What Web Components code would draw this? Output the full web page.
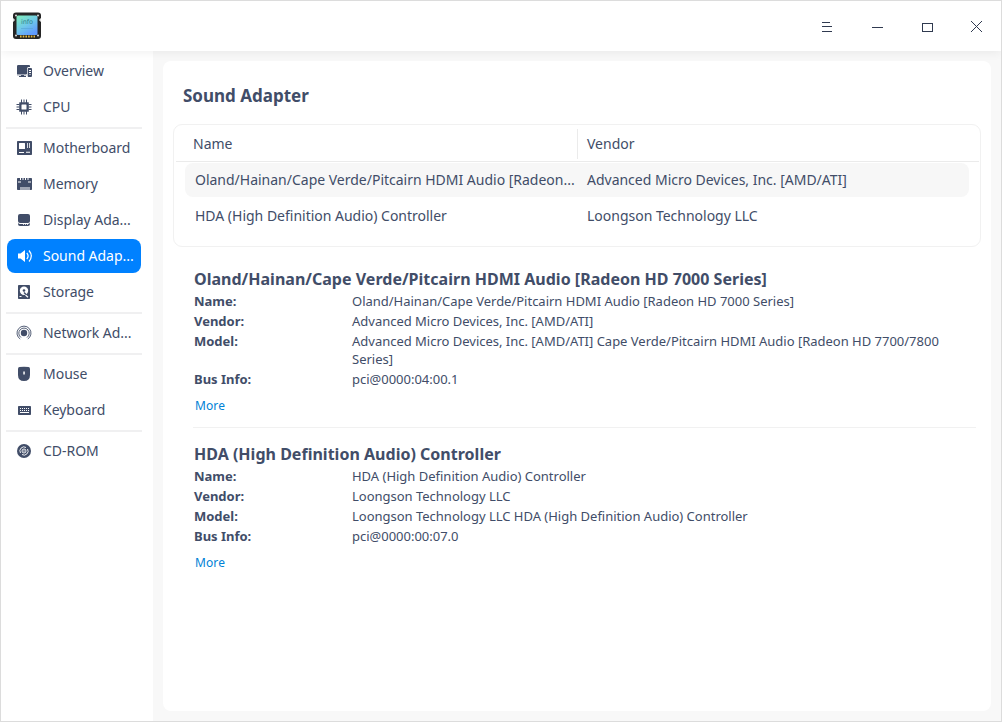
<!DOCTYPE html>
<html lang="en">
<head>
<meta charset="utf-8">
<title>Device Manager</title>
<style>
html,body{margin:0;height:100%;overflow:hidden}
body{font-family:"Noto Sans",sans-serif;color:#414d68}
</style>
</head>
<body>
<device-window></device-window>
<script>
const ICONS={
overview:'<path d="M1 3.200Q1 2 2.200 2H13q1 0 1 1v1h-1.500q-1.500 0-1.500 1.500V11H1Z"/><path d="M1 11.500h9.500v.8H1zM5 12h3v1H5zM3 13h7v1H3z"/><path fill-rule="evenodd" d="M12.500 5h2.500q1 0 1 1v7q0 1-1 1h-2.500q-.8 0-.8-1V6q0-1 .8-1Zm.5 2v1h2v-1Zm0 2v1h2v-1Zm.5 2v1h1v-1Z"/>',
cpu:'<rect x="3.200" y="3.200" width="9.600" height="9.600" rx=".5"/><path d="M5 .5h1v15H5zM7.500.5h1v3h-1zM7.500 12.500h1v3h-1zM10 .5h1v15h-1zM.5 5h3v1h-3zM.5 7.500h3v1h-3zM.5 10h3v1h-3zM12.500 5h3v1h-3zM12.500 7.500h3v1h-3zM12.500 10h3v1h-3z"/><rect x="5.500" y="5.500" width="5" height="5" rx=".5" fill="#fff"/>',
motherboard:'<path fill-rule="evenodd" d="M1.800 1h13.400q.8 0 .8.800v12.400q0 .8-.8.800H1.800q-.8 0-.8-.8V1.800q0-.8.800-.8ZM3.500 3Q3 3 3 3.500v5q0 .5.500.5h5q.5 0 .5-.5v-5Q9 3 8.500 3Zm7.500 0v5h.8V3Zm2 0v5h.8V3ZM3 12v1h5v-1Zm7-.2v1h4v-1Z"/>',
memory:'<path fill-rule="evenodd" d="M1.800 2H4v2h1V2h1.500v2h1V2H9v2h1V2h1.500v2h1V2h2.700q.8 0 .8.800v10.400q0 .8-.8.800H13.500v-3h-1v3h-1v-3h-1v3h-1v-3h-1v3h-1v-3h-1v3h-1v-3h-1v3H1.800q-.8 0-.8-.8V2.800Q1 2 1.800 2ZM2 5.500v.9h3v-.9Zm10 0v.9h3v-.9Z"/>',
display:'<path d="M2 4q0-2 2-2h8q2 0 2 2v5q0 2-2 2H4q-2 0-2-2Z"/><path fill-rule="evenodd" d="M2 11q1 1 2 1h8q1 0 2-1v1q0 2-2 2H4q-2 0-2-2Zm5 1.300v.8h1v-.8Zm2 0v.8h1v-.8Zm2 0v.8h1v-.8Z"/>',
sound:'<path d="M2 5.500h2.500L9 2v12L4.500 10.500H2Z"/><path fill="none" stroke="currentColor" stroke-width="1.200" d="M10.800 5q2.600 3 0 6M13 2.500q4.600 5.500 0 11"/>',
storage:'<rect x="2" y="1" width="12" height="14" rx=".8"/><circle cx="8" cy="6.800" r="4.200" fill="#fff"/><circle cx="8" cy="6.500" r="1.300"/><path d="m8 8.500 4 4" stroke="#414d68" stroke-width="1.400"/><path d="m9.500 11 2.500 2.200M3.500 12.500h2" stroke="#fff" stroke-width="1.200"/>',
network:'<circle cx="8" cy="8" r="3.200"/><g fill="none" stroke="currentColor" stroke-width=".9"><path d="M5 12.500A5.200 5.200 0 1 1 11 12.500M4.200 14A7 7 0 1 1 11.800 14"/></g>',
mouse:'<path fill-rule="evenodd" d="M3.500 1Q8 .5 12.500 1 14 1.200 14 3v6q0 6-6 6T2 9V3q0-1.800 1.500-2ZM7.300 5.500v3h1.500v-3Z"/>',
keyboard:'<path fill-rule="evenodd" d="M2.800 4h11.400q.8 0 .8.800v7.400q0 .8-.8.800H2.800Q2 13 2 12.200V4.800Q2 4 2.800 4ZM4 6v1h1V6Zm2 0v1h1V6Zm2 0v1h1V6Zm2 0v1h1V6Zm2 0v1h1V6ZM4 8v1h1V8Zm2 0v1h1V8Zm2 0v1h1V8Zm2 0v1h1V8Zm2 0v1h1V8Zm-8 2v1h9v-1Z"/>',
cd:'<circle cx="8" cy="8" r="7"/><g fill="none" stroke="#fff" stroke-width=".9"><circle cx="8" cy="8" r="2"/><path d="M4.500 10A4 4 0 0 1 10 4.500M11.500 6A4 4 0 0 1 6 11.500"/></g><circle cx="8" cy="8" r=".7" fill="#fff"/>'};

function define(name,markup){
  customElements.define(name,class extends HTMLElement{
    constructor(){super();this.attachShadow({mode:'open'}).innerHTML=typeof markup==='function'?markup(this):markup}
  });
}
define('app-logo',`<style>:host{display:block;width:28px;height:28px}svg{display:block}</style>
<svg width="28" height="28" viewBox="0 0 28 28"><defs><linearGradient id="g" x1="0" y1="0" x2=".65" y2="1"><stop stop-color="#80efba"/><stop offset=".55" stop-color="#70c9e8"/><stop offset="1" stop-color="#609bff"/></linearGradient></defs>
<path d="M3 .5h22q3 0 3 3V6l-1 1v2l1 1v14q0 3-3 3H3q-3 0-3-3V10l1-1V7L0 6V3.500q0-3 3-3Z" fill="#252525"/><rect x="3.500" y="3.500" width="21" height="19.500" rx="1.500" fill="url(#g)"/><g fill="#ddd"><circle cx="3" cy="3.500" r="1"/><circle cx="25" cy="3.500" r="1"/><circle cx="3" cy="23.500" r="1"/><circle cx="25" cy="23.500" r="1"/><circle cx=".8" cy="8" r="1"/><circle cx="27.200" cy="8" r="1"/></g><path d="M7 24.500h15" stroke="#e5b93c" stroke-width="2" stroke-dasharray="1.600 1.100"/><text x="14" y="12" text-anchor="middle" font-family="DejaVu Sans" font-size="6.500" fill="#2f8590">info</text><path d="M8 16.500h12" stroke="#58a7d5" stroke-width=".7"/></svg>`);

define('title-bar',`<style>:host{display:flex;height:50px;background:#fff;align-items:center;justify-content:space-between;padding:0 0 0 12px;box-sizing:border-box;position:relative;z-index:1;box-shadow:0 1px 10px #00000012}
nav{display:flex;margin-right:-1px}svg{width:50px;height:50px;fill:none;stroke:#303a50;stroke-width:1;shape-rendering:crispEdges}</style>
<app-logo></app-logo><nav><svg viewBox="0 0 50 50"><path d="M20 21.500h8M20 25.500h10M20 30.500h10"/></svg><svg viewBox="0 0 50 50"><path d="M20 26.500h11"/></svg><svg viewBox="0 0 50 50"><path d="M20.500 22.500h10v8h-10z"/></svg><svg viewBox="0 0 50 50"><path style="shape-rendering:auto" d="m19 20 11 11m0-11-11 11"/></svg></nav>`);

define('nav-item',el=>`<style>:host{display:flex;box-sizing:border-box;height:34px;margin:1px 12px 1px 6px;padding-left:9px;gap:10px;align-items:center;border-radius:8px;font-size:14px;line-height:20px;white-space:nowrap;flex:none;letter-spacing:-.02px}
:host([active]){background:#0081ff;color:#fff}svg{width:17px;height:16px;flex:none;fill:currentColor}</style><svg viewBox="0 0 17 16">${ICONS[el.getAttribute('icon')]}</svg><span><slot></slot></span>`);
define('nav-line','<style>:host{display:block;flex:none;height:2px;margin:2px 11px 1px 5px;background:#f0f0f1}</style>');
define('side-bar',`<style>:host{display:flex;flex-direction:column;width:152px;flex:none;background:#fff;padding-top:2px;box-sizing:border-box}</style>
<nav-item icon="overview">Overview</nav-item><nav-item icon="cpu">CPU</nav-item><nav-line></nav-line>
<nav-item icon="motherboard">Motherboard</nav-item><nav-item icon="memory">Memory</nav-item><nav-item icon="display">Display Ada...</nav-item><nav-item icon="sound" active>Sound Adap...</nav-item><nav-item icon="storage">Storage</nav-item><nav-line></nav-line>
<nav-item icon="network">Network Ad...</nav-item><nav-line></nav-line><nav-item icon="mouse">Mouse</nav-item><nav-item icon="keyboard">Keyboard</nav-item><nav-line></nav-line><nav-item icon="cd">CD-ROM</nav-item>`);

define('device-table',`<style>:host{display:block;height:123px;box-sizing:border-box;border:1px solid #f1f1f1;border-radius:9px;margin:0 10px;font-size:14px;line-height:20px;white-space:nowrap;letter-spacing:-.01px}
.h{display:grid;grid-template-columns:403px 1fr;height:37px;box-sizing:border-box;border-bottom:1px solid #ebebeb;align-items:end;margin:0 1px 0 2px;padding-bottom:2px}
.h span{padding:5px 0 5px 17px}.h span+span{border-left:1px solid #ebebeb;padding-left:9px;margin-left:-2px}
.r{display:grid;grid-template-columns:392px 1fr;height:34px;margin:1px 11px 2px;padding-left:10px;align-items:center;border-radius:8px}.s{background:#f7f7f7}</style>
<div class="h"><span>Name</span><span>Vendor</span></div>
<div class="r s"><span>Oland/Hainan/Cape Verde/Pitcairn HDMI Audio [Radeon...</span><span>Advanced Micro Devices, Inc. [AMD/ATI]</span></div>
<div class="r"><span>HDA (High Definition Audio) Controller</span><span>Loongson Technology LLC</span></div>`);

define('info-row',el=>`<style>:host{display:grid;grid-template-columns:158px 600px;font-size:13px;line-height:18px;margin-bottom:2px;letter-spacing:-.01px}b{font-weight:700}</style><b>${el.getAttribute('label')}</b><span><slot></slot></span>`);
define('device-info',el=>`<style>:host{display:flow-root;margin-left:31px}h2{font-size:16px;line-height:22px;margin:0 0 2px;font-weight:700;white-space:nowrap;letter-spacing:.015px}a{display:block;font-size:12px;line-height:16px;letter-spacing:.1px;color:#0082d6;margin:10px 0 0 1px}</style><h2>${el.getAttribute('heading')}</h2><slot></slot><a>More</a>`);

define('device-window',`<style>:host{display:flex;flex-direction:column;width:1002px;height:722px;box-sizing:border-box;border:1px solid #dcdcdc;background:#f8f8f8;overflow:hidden}
.body{display:flex;flex:1;min-height:0}main{flex:1;margin:10px;background:#fff;border-radius:8px;box-sizing:border-box;display:flow-root}h1{font-size:17px;line-height:24px;margin:23px 0 16px 20px;font-weight:700}
hr{border:0;height:1px;background:#f1f1f1;margin:13px 15px 15px 30px}.first{margin-top:21px}</style>
<title-bar></title-bar><div class="body"><side-bar></side-bar><main><h1>Sound Adapter</h1><device-table></device-table>
<device-info class="first" heading="Oland/Hainan/Cape Verde/Pitcairn HDMI Audio [Radeon HD 7000 Series]"><info-row label="Name:">Oland/Hainan/Cape Verde/Pitcairn HDMI Audio [Radeon HD 7000 Series]</info-row><info-row label="Vendor:">Advanced Micro Devices, Inc. [AMD/ATI]</info-row><info-row label="Model:">Advanced Micro Devices, Inc. [AMD/ATI] Cape Verde/Pitcairn HDMI Audio [Radeon HD 7700/7800 Series]</info-row><info-row label="Bus Info:">pci@0000:04:00.1</info-row></device-info><hr>
<device-info heading="HDA (High Definition Audio) Controller"><info-row label="Name:">HDA (High Definition Audio) Controller</info-row><info-row label="Vendor:">Loongson Technology LLC</info-row><info-row label="Model:">Loongson Technology LLC HDA (High Definition Audio) Controller</info-row><info-row label="Bus Info:">pci@0000:00:07.0</info-row></device-info></main></div>`);
</script>
</body>
</html>
